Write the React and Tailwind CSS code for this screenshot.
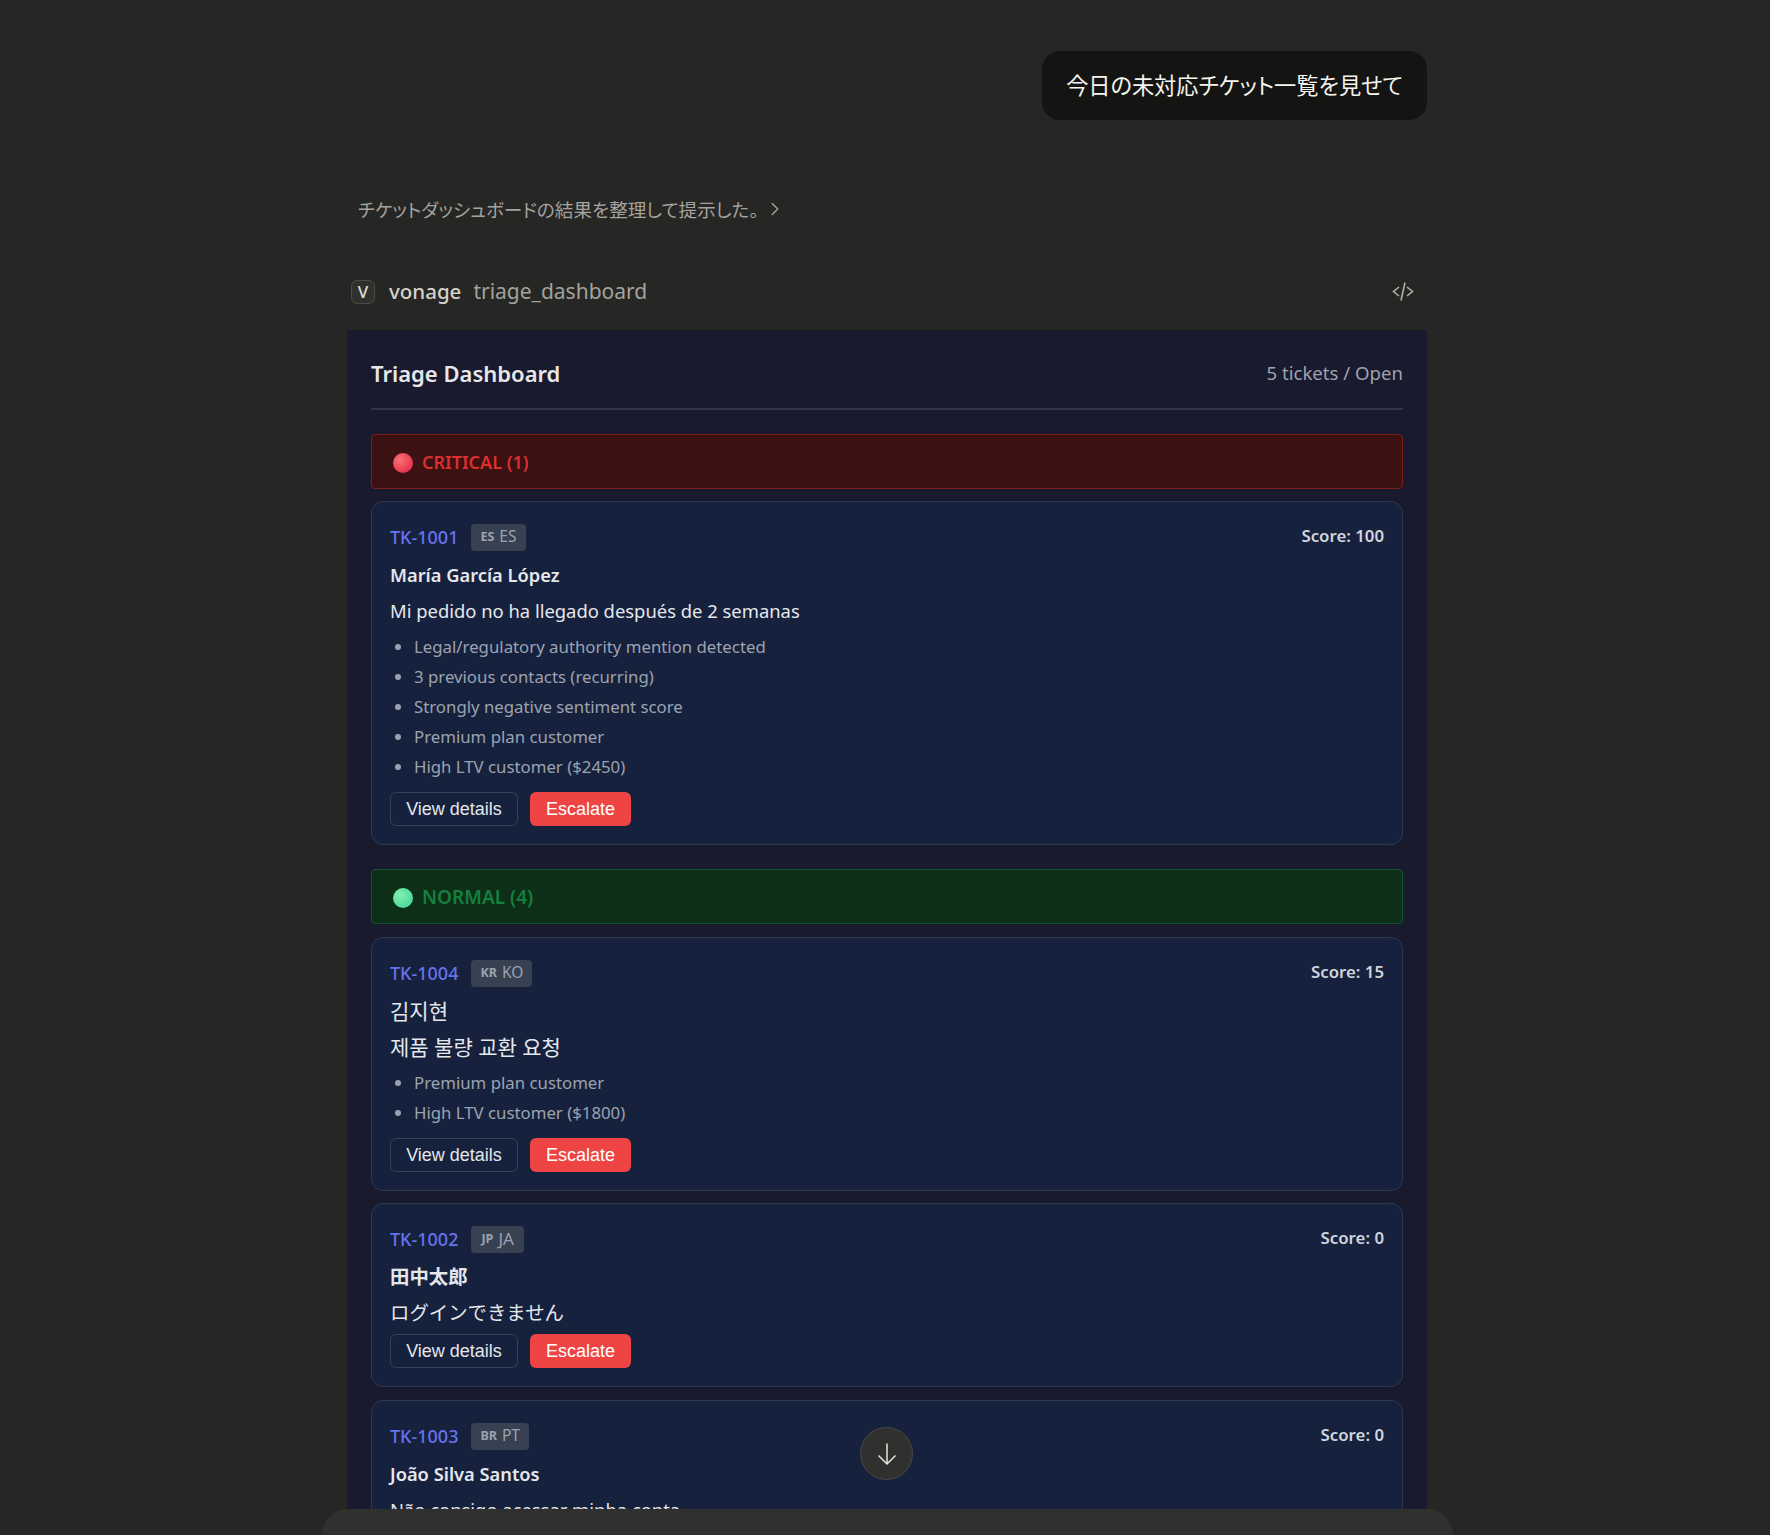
import { ChevronRight } from 'lucide-react';

const TICKETS_NORMAL = [
  {
    id: 'TK-1004',
    flag: 'KR',
    lang: 'KO',
    score: 15,
    name: '김지현',
    nameClass: 'font-normal text-[21px]',
    title: '제품 불량 교환 요청',
    titleClass: 'text-[21px]',
    reasons: ['Premium plan customer', 'High LTV customer ($1800)'],
    actions: true,
  },
  {
    id: 'TK-1002',
    flag: 'JP',
    lang: 'JA',
    langClass: 'px-[10px] text-[17px]',
    score: 0,
    name: '田中太郎',
    nameClass: 'font-semibold text-[19.4px]',
    title: 'ログインできません',
    titleClass: 'text-[19.4px]',
    reasons: [],
    actions: true,
  },
  {
    // only the top of this card shows above the composer
    id: 'TK-1003',
    flag: 'BR',
    lang: 'PT',
    score: 0,
    name: 'João Silva Santos',
    title: 'Não consigo acessar minha conta',
    reasons: [],
    actions: false,
    cardClass: 'mt-[1px]',
  },
];

const TICKET_CRITICAL = {
  id: 'TK-1001',
  flag: 'ES',
  lang: 'ES',
  score: 100,
  name: 'María García López',
  title: 'Mi pedido no ha llegado después de 2 semanas',
  reasons: [
    'Legal/regulatory authority mention detected',
    '3 previous contacts (recurring)',
    'Strongly negative sentiment score',
    'Premium plan customer',
    'High LTV customer ($2450)',
  ],
  actions: true,
};

const SANS = "font-['Noto_Sans','Noto_Sans_CJK_KR',sans-serif]";
const PALT = "font-['Noto_Sans_CJK_JP',sans-serif] [font-feature-settings:'palt']";

const TicketCard = ({ ticket }) => (
  <div className={`rounded-[12px] border border-[#2c3850] bg-[#16213e] px-[18px] pt-[18px] pb-[18px] ${ticket.cardClass || ''}`}>
    <div className="flex h-[34px] items-center justify-between">
      <div className="flex items-center gap-[13px]">
        <span className="text-[18px] font-medium text-[#6673ee]">{ticket.id}</span>
        <span className={`flex h-[27px] items-center gap-[5px] rounded-[4px] bg-[#374151] text-[#9ca3af] ${ticket.langClass || 'px-[9px] text-[15.5px]'}`}>
          <span className="text-[12.5px] font-bold">{ticket.flag}</span>
          {ticket.lang}
        </span>
      </div>
      <span className="mb-[2px] text-[16.8px] font-semibold text-[#d1d5db]">Score: {ticket.score}</span>
    </div>
    <div className={`mt-[9px] leading-[24px] text-[#e5e7eb] ${ticket.nameClass || 'font-semibold text-[18.3px]'}`}>
      {ticket.name}
    </div>
    <div className={`mt-[12px] mb-[9px] leading-[24px] text-[#e5e7eb] ${ticket.titleClass || 'text-[18.4px]'}`}>
      {ticket.title}
    </div>
    {ticket.reasons.length > 0 && (
      <ul className="mb-[10px] list-disc pl-[24px] text-[16.8px] leading-[30px] text-[#9ca3af]">
        {ticket.reasons.map((r) => (
          <li key={r}>{r}</li>
        ))}
      </ul>
    )}
    {ticket.actions && (
      <div className="flex gap-[12px] font-['Liberation_Sans',sans-serif] text-[18px]">
        <button className="h-[34px] w-[128px] rounded-[6px] border border-[#374151] bg-transparent text-[#e5e7eb]">
          View details
        </button>
        <button className="h-[34px] w-[101px] rounded-[6px] bg-[#ef4444] text-white">Escalate</button>
      </div>
    )}
  </div>
);

const Band = ({ label, className, dotClass }) => (
  <div className={`flex h-[55px] items-center gap-[9px] rounded-[4px] border px-[21px] pt-[2px] font-semibold ${className}`}>
    <span className={`h-[20px] w-[20px] rounded-full ${dotClass}`} />
    {label}
  </div>
);

export default function App() {
  return (
    <div className={`relative h-[1535px] overflow-hidden bg-[#262624] ${SANS}`}>
      <div className="ml-[347px] w-[1080px] pt-[51px]">
        <div className="flex justify-end">
          <div className={`flex h-[69px] w-[385px] items-center justify-center rounded-[18px] bg-[#141413] pb-[2px] text-[22.2px] text-[#f5f4ef] ${PALT}`}>
            今日の未対応チケット一覧を見せて
          </div>
        </div>

        <div className={`mt-[74px] flex h-[30px] items-center pl-[11px] text-[18.6px] text-[#a3a29c] ${PALT}`}>
          チケットダッシュボードの結果を整理して提示した。
          <ChevronRight size={22} strokeWidth={1.5} className="ml-[5px]" />
        </div>

        <div className="mt-[56px] flex h-[24px] items-center pl-[4px] text-[20.5px]">
          <span className="flex h-[24px] w-[24px] items-center justify-center rounded-[6px] border border-[#4a4a46] bg-[#30302e] text-[17px] font-medium text-[#dedcd4]">
            V
          </span>
          <span className="mb-[2px] ml-[14px] font-medium text-[#d4d2ca]">vonage</span>
          <span className="ml-[12px] text-[21px] text-[#a3a29c]">triage_dashboard</span>
          <svg
            width="22"
            height="19"
            viewBox="0 0 22 19"
            fill="none"
            stroke="#b0aea6"
            strokeWidth="1.6"
            className="mr-[13px] mb-[1px] ml-auto"
          >
            <path d="M7 5 1.5 9.5 7 14M15 5l5.5 4.5L15 14M13 .5 9 18.5" />
          </svg>
        </div>

        <div className="mt-[26px] h-[1300px] bg-[#1a1a2e] p-[24px]">
          <div className="flex h-[56px] items-start justify-between border-b-2 border-[#2f3648]">
            <span className="text-[22px] leading-[38px] font-semibold text-[#e5e7eb]">Triage Dashboard</span>
            <span className="text-[18.6px] leading-[38px] text-[#9ca3af]">5 tickets / Open</span>
          </div>

          <div className="mt-[24px] flex flex-col gap-[12px]">
            <Band
              label="CRITICAL (1)"
              className="border-[#7f1d1d] bg-[#3b1111] text-[18px] text-[#dc2f2f]"
              dotClass="bg-[radial-gradient(circle_at_35%_35%,#f87171,#e11d48)]"
            />
            <TicketCard ticket={TICKET_CRITICAL} />
            <div className="mt-[12px] mb-[1px]">
              <Band
                label="NORMAL (4)"
                className="border-[#14532d] bg-[#0d2e17] text-[19px] text-[#15803d]"
                dotClass="bg-[radial-gradient(circle_at_35%_35%,#86efac,#34d399)]"
              />
            </div>
            {TICKETS_NORMAL.map((t) => (
              <TicketCard key={t.id} ticket={t} />
            ))}
          </div>
        </div>
      </div>

      <button className="absolute top-[1427px] left-[860px] flex h-[53px] w-[53px] items-center justify-center rounded-full border border-[#4a4a46] bg-[#30302e]">
        <svg width="24" height="24" viewBox="0 0 24 24" fill="none" stroke="#e5e4de" strokeWidth="1.5">
          <path d="M12 1.5V22M3.5 13.5 12 22l8.5-8.5" />
        </svg>
      </button>
      <div className="absolute top-[1509px] left-[322px] h-[60px] w-[1131px] rounded-t-[26px] bg-[#30302e]" />
    </div>
  );
}
